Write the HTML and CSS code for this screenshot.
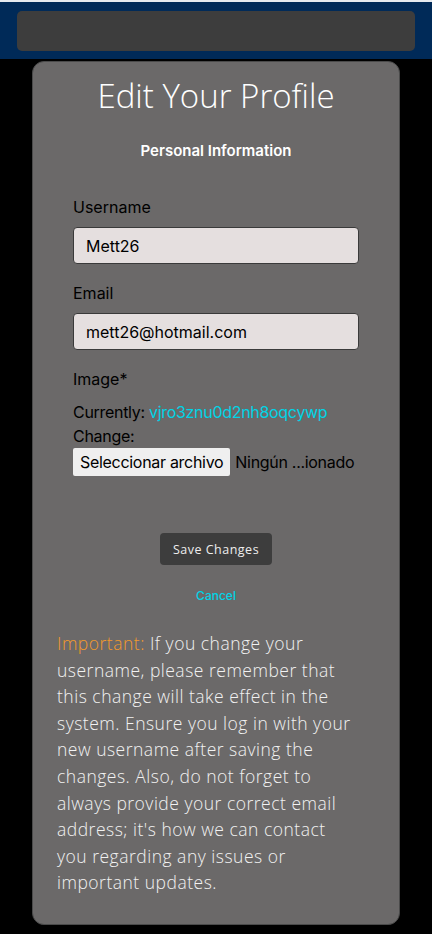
FILE: index.html
```html
<!DOCTYPE html>
<html lang="en">
<head>
<meta charset="utf-8">
<title>Edit Your Profile</title>
<link rel="stylesheet" href="styles.css">
</head>
<body>
<header class="topbar">
  <div class="nav"></div>
</header>
<main class="card">
  <h1 class="title">Edit Your Profile</h1>
  <h2 class="subtitle">Personal Information</h2>
  <form class="form">
    <div class="field">
      <label class="label" for="username">Username</label>
      <input class="input" id="username" type="text" value="Mett26">
    </div>
    <div class="field">
      <label class="label" for="email">Email</label>
      <input class="input" id="email" type="text" value="mett26@hotmail.com">
    </div>
    <div class="image-field">
      <div class="label">Image*</div>
      <div class="current">Currently: <a class="link" href="#">vjro3znu0d2nh8oqcywp</a></div>
      <div class="change">Change:</div>
      <div class="file">
        <span class="file-btn">Seleccionar archivo</span>
        <span class="file-name">Ningún ...ionado</span>
      </div>
    </div>
    <div class="actions">
      <button class="save" type="button">Save Changes</button>
      <a class="cancel" href="#">Cancel</a>
    </div>
  </form>
  <p class="note"><span class="important">Important:</span> If you change your<br>username, please remember that<br>this change will take effect in the<br>system. Ensure you log in with your<br>new username after saving the<br>changes. Also, do not forget to<br>always provide your correct email<br>address; it's how we can contact<br>you regarding any issues or<br>important updates.</p>
</main>
</body>
</html>
```

FILE: styles.css
```css
html, body {
  margin: 0;
  padding: 0;
}
body {
  background: #000;
  font-family: Inter, "Liberation Sans", sans-serif;
  min-height: 934px;
}
.topbar {
  background: #002a58;
  border-top: 2px solid #e6eaef;
  padding: 9px 17px 8px;
}
.nav {
  height: 40px;
  background: #3d3d3d;
  border-radius: 5px;
}
.card {
  box-sizing: border-box;
  width: 368px;
  height: 864px;
  margin: 2px auto 0;
  background: #6b6969;
  border: 1px solid #4a4a4a;
  border-radius: 12px;
  padding: 13px 0 0;
}
.title {
  margin: 0;
  text-align: center;
  font-family: "Open Sans", sans-serif;
  font-weight: 300;
  font-size: 33px;
  line-height: 42px;
  color: #fff;
}
.subtitle {
  margin: 24px 0 0;
  text-align: center;
  font-size: 15px;
  font-weight: 600;
  line-height: 20px;
  color: #fff;
}
.form {
  padding: 0 40px;
  margin-top: 36px;
}
.field {
  display: flex;
  flex-direction: column;
  margin-bottom: 19px;
}
.label {
  font-size: 16px;
  line-height: 20px;
  color: #000;
  margin-bottom: 10px;
}
.input {
  box-sizing: border-box;
  width: 286px;
  height: 37px;
  border: 1px solid #3a3a3a;
  border-radius: 4px;
  background: #e5dfdf;
  padding: 0 12px;
  font-family: Inter, "Liberation Sans", sans-serif;
  font-size: 16px;
  color: #000;
  outline: none;
}
.image-field .label {
  margin-bottom: 11px;
}
.current, .change {
  font-size: 16px;
  line-height: 24px;
  color: #000;
  letter-spacing: -0.3px;
  white-space: nowrap;
}
.link {
  color: #00d4e6;
  text-decoration: none;
}
.file {
  display: flex;
  align-items: center;
  gap: 5px;
  margin-top: 0;
  white-space: nowrap;
  letter-spacing: -0.3px;
}
.file-btn {
  flex-shrink: 0;
  display: inline-flex;
  align-items: center;
  height: 28px;
  padding: 0 7px;
  background: #efefef;
  border-radius: 2px;
  font-size: 16px;
  color: #000;
}
.file-name {
  flex-shrink: 0;
  font-size: 16px;
  color: #000;
}
.actions {
  display: flex;
  flex-direction: column;
  align-items: center;
  margin-top: 57px;
}
.save {
  height: 32px;
  width: 112px;
  background: #3d3d3d;
  border: none;
  border-radius: 4px;
  color: #eee;
  font-family: "Open Sans", sans-serif;
  font-size: 12.5px;
  letter-spacing: 0.5px;
  padding: 0;
}
.cancel {
  margin-top: 23px;
  font-size: 12px;
  font-weight: 500;
  color: #00d4e6;
  text-decoration: none;
  line-height: 16px;
}
.note {
  margin: 26px 0 0;
  padding: 0 20px 0 24px;
  font-family: "Open Sans", sans-serif;
  font-weight: 300;
  font-size: 17.5px;
  letter-spacing: 0.5px;
  line-height: 26.6px;
  color: #f2f2f2;
  white-space: nowrap;
}
.important {
  color: #f39a2c;
}
```
